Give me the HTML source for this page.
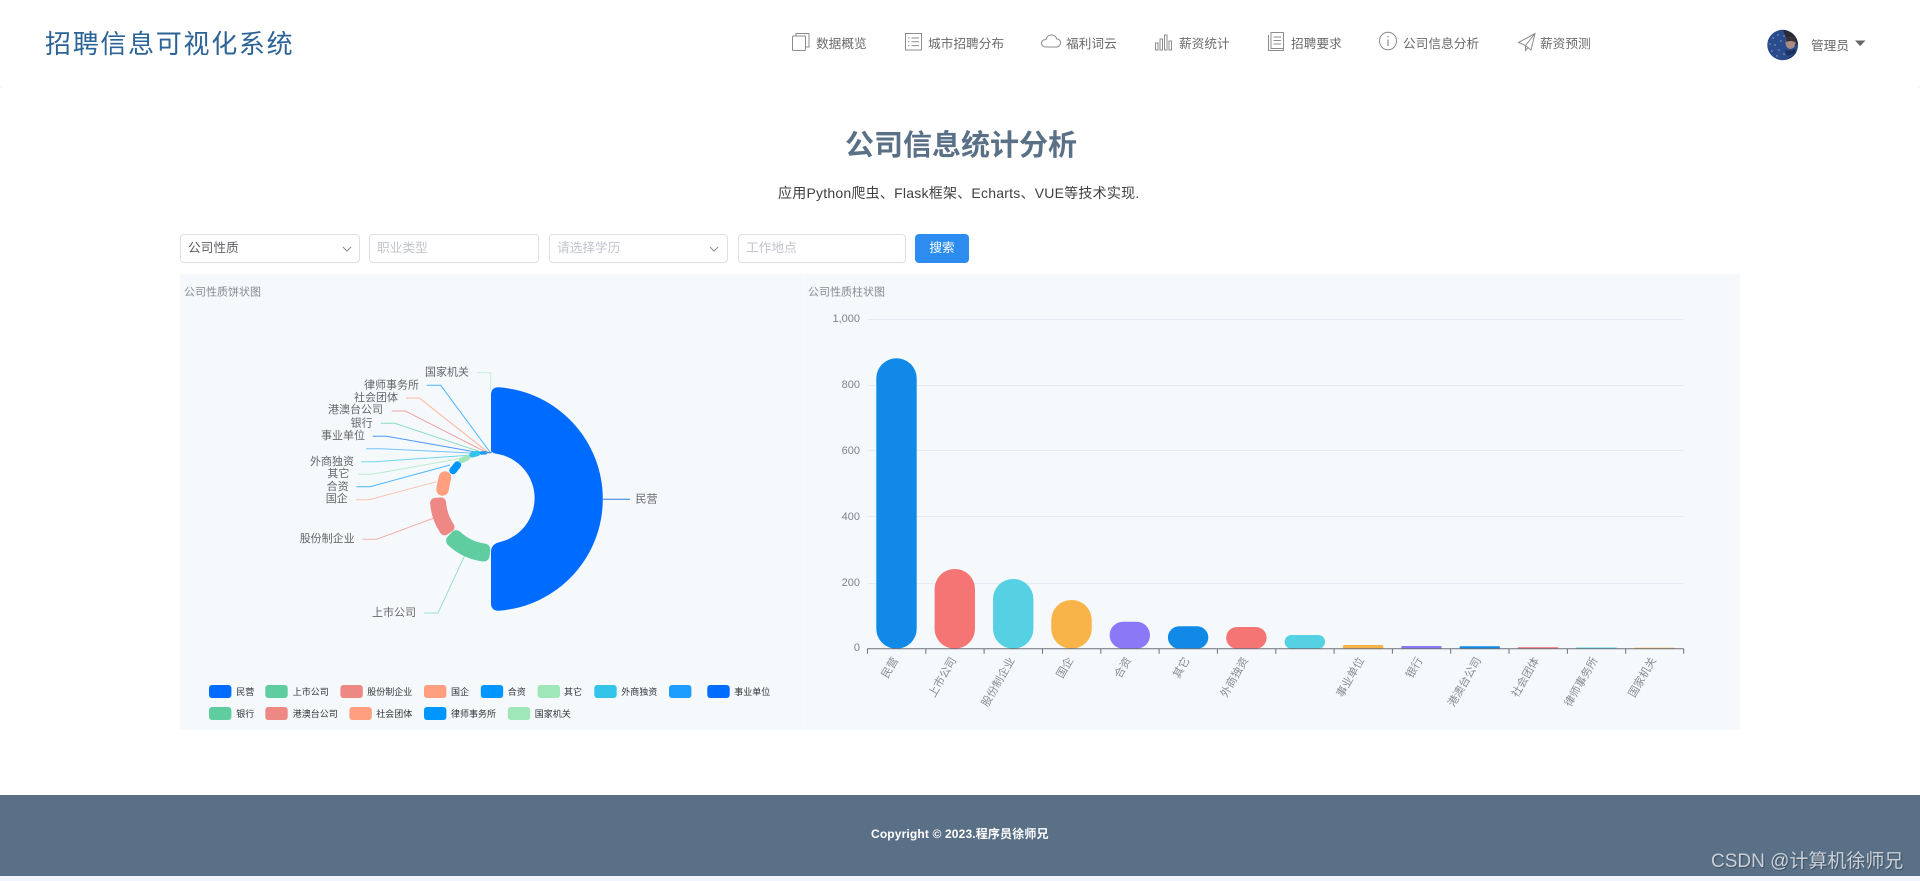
<!DOCTYPE html>
<html lang="zh-CN">
<head>
<meta charset="utf-8">
<title>公司信息统计分析</title>
<style>
html,body{margin:0;padding:0;width:1920px;height:881px;overflow:hidden;background:#fff;font-family:"Liberation Sans","Noto Sans CJK SC",sans-serif}
.t{position:absolute;white-space:nowrap;line-height:20px;height:20px}
.nav{font-size:12.7px;color:#6a6a6a}
.box{position:absolute;box-sizing:border-box;top:234px;height:29px;background:#fff;border:1px solid #dcdfe6;border-radius:4px;font-size:12.7px;line-height:27px;padding-left:7px;color:#c0c4cc;white-space:nowrap}
svg{position:absolute;left:0;top:0}
</style>
</head>
<body>
<div style="position:absolute;left:0;top:0;width:1920px;height:88px;background:#fff"></div>
<svg width="1920" height="881" viewBox="0 0 1920 881" font-family="'Liberation Sans','Noto Sans CJK SC',sans-serif">
  <!-- header corners -->
  <path d="M0 83V88H5Q0 88 0 83Z" fill="#f0f5ff"/>
  <path d="M1920 83V88H1915Q1920 88 1920 83Z" fill="#f0f5ff"/>

  <!-- nav icons -->
  <g fill="none" stroke="#8c8c8c" stroke-width="1">
    <rect x="792.5" y="36" width="13" height="14.5" rx="1" fill="#fff"/>
    <path d="M796 35.5V33.5H809V47H806"/>
    <rect x="905.5" y="33.5" width="16" height="16.5"/>
    <path d="M908 38H909.5M911.5 38H919M908 41.8H909.5M911.5 41.8H919M908 45.6H909.5M911.5 45.6H919"/>
    <path d="M1046 47H1056C1059 47 1060.5 45 1060.5 42.8C1060.5 40.5 1058.8 39 1056.8 39C1056 36.5 1054 35 1051.5 35C1048.5 35 1046.5 37 1046 39.5C1043 39.7 1041.5 41.3 1041.5 43.3C1041.5 45.5 1043.4 47 1046 47Z"/>
    <path d="M1155.5 50V43H1158V50ZM1160 50V39H1162.5V50ZM1164.5 50V35H1167V50ZM1169 50V41H1171.5V50Z"/>
    <path d="M1268.5 35V50.5H1283.5V48M1271 48.5V32.5H1283.5V48.5ZM1273.5 37H1281M1273.5 40.5H1281M1273.5 44H1281"/>
    <ellipse cx="1388" cy="41" rx="8.5" ry="8.8"/>
    <path d="M1388 39.5V46M1388 36V37.4" stroke="#777"/>
    <path d="M1518.5 42.5L1535 33.5L1531 50L1525.5 45.5ZM1535 33.5L1525.5 45.5V50.5L1528 47.5"/>
  </g>

  <!-- avatar -->
  <clipPath id="av"><ellipse cx="1782.7" cy="45" rx="15.4" ry="15.2"/></clipPath>
  <g clip-path="url(#av)">
    <rect x="1767" y="29" width="32" height="32" fill="#2b4c8c"/>
    <path d="M1783 61C1790 58 1796 54 1799 48V61Z" fill="#16294f"/>
    <path d="M1767 50V61H1777C1772 58 1769 54 1767 50Z" fill="#1f3a70"/>
    <path d="M1783 30C1790 30 1797 36 1798 44L1795 46C1794 40 1790 38 1787 38C1785 36 1784 33 1783 30Z" fill="#2b2a35"/>
    <ellipse cx="1790.5" cy="43" rx="5" ry="5.8" fill="#ab8a84"/>
    <path d="M1786 39Q1790 35.5 1795.5 39.5L1795 42Q1790 40 1786.5 42Z" fill="#3a2f33"/>
    <path d="M1785 50Q1790 52 1795 48.5L1796 53L1787 56Z" fill="#1d3160"/>
    <g fill="#c3d2ec">
      <circle cx="1773" cy="38" r=".6"/><circle cx="1778" cy="35" r=".6"/><circle cx="1775" cy="45" r=".6"/>
      <circle cx="1781" cy="41" r=".6"/><circle cx="1772" cy="51" r=".6"/><circle cx="1779" cy="50" r=".6"/>
      <circle cx="1784" cy="36" r=".6"/><circle cx="1784" cy="54" r=".6"/><circle cx="1770" cy="44" r=".6"/><circle cx="1777" cy="56" r=".6"/>
    </g>
  </g>
  <path d="M1855 40.5H1865.5L1860.2 46Z" fill="#666"/>

  <!-- charts background -->
  <rect x="180" y="274" width="1560" height="456" fill="#f5f9fc"/>
  <rect x="803.3" y="274" width="1" height="450" fill="#fafcfd"/>

  <!-- chart titles -->
  <text x="184" y="295.5" font-size="11" fill="#8a8a8a">公司性质饼状图</text>
  <text x="808" y="295.5" font-size="11" fill="#8a8a8a">公司性质柱状图</text>

  <!-- pie label lines -->
  <g fill="none" stroke-width="1">
    <path d="M477.3 372.7H490.7V390" stroke="#c6efd6"/>
    <path d="M426.7 385.3H440.7L490.7 453" stroke="#4db5ff"/>
    <path d="M406 398H419.3L489.3 453.3" stroke="#ffb69c"/>
    <path d="M391.7 411H405.3L488.3 453.3" stroke="#f0a3a0"/>
    <path d="M380.7 423.3H394.7L480 451.7" stroke="#8cdcbc"/>
    <path d="M372.7 436.3H386.7L480 452.7" stroke="#4d98ff"/>
    <path d="M366 448.7H380L476.7 453.3" stroke="#76c4ff"/>
    <path d="M361.3 461.7H375L473.3 455" stroke="#70d6ef"/>
    <path d="M358.3 474.3H372L461.7 458.3" stroke="#bceecd"/>
    <path d="M356.3 486.7H370L450 465" stroke="#4db5ff"/>
    <path d="M355.7 499.7H369L436.7 481.7" stroke="#ffc2ad"/>
    <path d="M362.4 539.3H376.7L434 518" stroke="#f4b1ae"/>
    <path d="M424 613H438L464.5 556" stroke="#9fe1c6"/>
    <path d="M603 499.3H630" stroke="#2f7fe0"/>
  </g>

  <!-- pie slices -->
  <path d="M491 395Q491 387 499 387.3A112 112 0 0 1 499 610.7Q491 611 491 603V552Q491 544 500 542A45 45 0 0 0 498 454Q492.5 453.5 491 451Z" fill="#006cff"/>
  <path d="M483.6 555.5A57 57 0 0 1 452.1 540.7L456.2 536.3A51 51 0 0 0 484.3 549.6Z" fill="#60cda0" stroke="#60cda0" stroke-width="12" stroke-linejoin="round"/>
  <path d="M444.6 530.3A56 56 0 0 1 435.1 502.9L441.1 502.5A50 50 0 0 0 449.5 527Z" fill="#ed8884" stroke="#ed8884" stroke-width="10" stroke-linejoin="round"/>
  <g fill="none" stroke-linecap="round">
    <path d="M442.5 489.5Q443.5 483 445 477.5" stroke="#ff9f7f" stroke-width="12.5"/>
    <path d="M453 470.5L457.5 465" stroke="#0096ff" stroke-width="7.5"/>
    <path d="M461.5 460.5L467.5 457.5" stroke="#9fe6b8" stroke-width="5.5"/>
    <path d="M472 454.8L477.5 453.3" stroke="#32c5e9" stroke-width="5.5"/>
    <path d="M481.5 453L485.5 452.7" stroke="#1d9dff" stroke-width="3.5"/>
    <path d="M486 452.6L491 452.6" stroke="#5a8fd0" stroke-width="1.4"/>
  </g>

  <!-- pie labels -->
  <g font-size="11" fill="#666" text-anchor="end">
    <text x="469" y="375.5">国家机关</text>
    <text x="419" y="388.5">律师事务所</text>
    <text x="398" y="401">社会团体</text>
    <text x="383" y="413">港澳台公司</text>
    <text x="372.6" y="426.5">银行</text>
    <text x="365" y="439">事业单位</text>
    <text x="354" y="465">外商独资</text>
    <text x="349.4" y="477">其它</text>
    <text x="348.6" y="490">合资</text>
    <text x="347.8" y="502">国企</text>
    <text x="354.7" y="542">股份制企业</text>
    <text x="416" y="616">上市公司</text>
  </g>
  <text x="635.5" y="502.7" font-size="11" fill="#666">民营</text>

  <!-- legend -->
  <g>
    <rect x="209" y="685" width="22.4" height="13" rx="3" fill="#006cff"/>
    <rect x="265.3" y="685" width="22.4" height="13" rx="3" fill="#60cda0"/>
    <rect x="340.4" y="685" width="22.4" height="13" rx="3" fill="#ed8884"/>
    <rect x="424" y="685" width="22.4" height="13" rx="3" fill="#ff9f7f"/>
    <rect x="480.8" y="685" width="22.4" height="13" rx="3" fill="#0096ff"/>
    <rect x="537.6" y="685" width="22.4" height="13" rx="3" fill="#9fe6b8"/>
    <rect x="594.3" y="685" width="22.4" height="13" rx="3" fill="#32c5e9"/>
    <rect x="669" y="685" width="22.4" height="13" rx="3" fill="#1d9dff"/>
    <rect x="707.3" y="685" width="22.4" height="13" rx="3" fill="#006cff"/>
    <rect x="209" y="707" width="22.4" height="13" rx="3" fill="#60cda0"/>
    <rect x="265.3" y="707" width="22.4" height="13" rx="3" fill="#ed8884"/>
    <rect x="349.4" y="707" width="22.4" height="13" rx="3" fill="#ff9f7f"/>
    <rect x="424" y="707" width="22.4" height="13" rx="3" fill="#0096ff"/>
    <rect x="507.8" y="707" width="22.4" height="13" rx="3" fill="#9fe6b8"/>
  </g>
  <g font-size="9" fill="#333">
    <text x="236.3" y="694.8">民营</text>
    <text x="292.7" y="694.8">上市公司</text>
    <text x="367.3" y="694.8">股份制企业</text>
    <text x="451" y="694.8">国企</text>
    <text x="507.8" y="694.8">合资</text>
    <text x="564" y="694.8">其它</text>
    <text x="621.2" y="694.8">外商独资</text>
    <text x="734.3" y="694.8">事业单位</text>
    <text x="236.3" y="716.8">银行</text>
    <text x="292.7" y="716.8">港澳台公司</text>
    <text x="376.3" y="716.8">社会团体</text>
    <text x="451" y="716.8">律师事务所</text>
    <text x="534.7" y="716.8">国家机关</text>
  </g>

  <!-- bar grid -->
  <g stroke="#e7ebf3" stroke-width="1" fill="none">
    <path d="M867.3 319.5H1683.7M867.3 385.5H1683.7M867.3 450.5H1683.7M867.3 516.5H1683.7M867.3 583.5H1683.7"/>
  </g>

  <!-- bars -->
  <rect x="876.3" y="358.3" width="40.4" height="290.4" rx="20" fill="#1089e7"/>
  <rect x="934.6" y="569" width="40.4" height="79.7" rx="20" fill="#f57474"/>
  <rect x="993" y="579" width="40.4" height="69.7" rx="20" fill="#56d0e3"/>
  <rect x="1051.3" y="600" width="40.4" height="48.7" rx="20" fill="#f8b448"/>
  <rect x="1109.6" y="621.7" width="40.4" height="27" rx="13.5" fill="#8b78f6"/>
  <rect x="1167.9" y="626.3" width="40.4" height="22.4" rx="11.2" fill="#1089e7"/>
  <rect x="1226.2" y="627" width="40.4" height="21.7" rx="10.8" fill="#f57474"/>
  <rect x="1284.6" y="635" width="40.4" height="13.7" rx="6.8" fill="#56d0e3"/>
  <rect x="1342.9" y="645" width="40.4" height="3.7" rx="1.5" fill="#f8b448"/>
  <rect x="1401.2" y="646" width="40.4" height="2.7" rx="1.2" fill="#8b78f6"/>
  <rect x="1459.5" y="646.3" width="40.4" height="2.4" rx="1" fill="#1089e7"/>
  <rect x="1517.8" y="647.2" width="40.4" height="1.5" fill="#f57474"/>
  <rect x="1576.2" y="647.5" width="40.4" height="1.2" fill="#56d0e3"/>
  <rect x="1634.5" y="647.7" width="40.4" height="1" fill="#f8b448"/>

  <!-- axis -->
  <path d="M867.3 648.7H1683.7" stroke="#6e7079" stroke-width="1" fill="none"/>
  <path d="M867.5 648.7v5M925.8 648.7v5M984.1 648.7v5M1042.5 648.7v5M1100.8 648.7v5M1159.1 648.7v5M1217.4 648.7v5M1275.8 648.7v5M1334.1 648.7v5M1392.4 648.7v5M1450.7 648.7v5M1509 648.7v5M1567.4 648.7v5M1625.7 648.7v5M1683.7 648.7v5" stroke="#6e7079" stroke-width="1" fill="none"/>

  <!-- y labels -->
  <g font-size="11" fill="#7f828a" text-anchor="end">
    <text x="860" y="322">1,000</text>
    <text x="860" y="388">800</text>
    <text x="860" y="454">600</text>
    <text x="860" y="520">400</text>
    <text x="860" y="586">200</text>
    <text x="860" y="651">0</text>
  </g>

  <!-- x labels -->
  <g font-size="11" fill="#8a8c92" text-anchor="end">
    <text transform="translate(898.5 660) rotate(-60)">民营</text>
    <text transform="translate(956.5 660) rotate(-60)">上市公司</text>
    <text transform="translate(1015 660) rotate(-60)">股份制企业</text>
    <text transform="translate(1073.5 660) rotate(-60)">国企</text>
    <text transform="translate(1131.5 660) rotate(-60)">合资</text>
    <text transform="translate(1190 660) rotate(-60)">其它</text>
    <text transform="translate(1248.5 660) rotate(-60)">外商独资</text>
    <text transform="translate(1364.5 660) rotate(-60)">事业单位</text>
    <text transform="translate(1423 660) rotate(-60)">银行</text>
    <text transform="translate(1481.5 660) rotate(-60)">港澳台公司</text>
    <text transform="translate(1539.5 660) rotate(-60)">社会团体</text>
    <text transform="translate(1598 660) rotate(-60)">律师事务所</text>
    <text transform="translate(1656.5 660) rotate(-60)">国家机关</text>
  </g>

  <!-- footer -->
  <rect x="0" y="795" width="1920" height="81" fill="#5a7087"/>
  <rect x="0" y="876" width="1920" height="5" fill="#f0f5ff"/>
</svg>

<div class="t" style="left:45px;top:28px;height:32px;line-height:32px;font-size:26px;letter-spacing:1.7px;color:#2c6396">招聘信息可视化系统</div>

<div class="t nav" style="left:816px;top:34px">数据概览</div>
<div class="t nav" style="left:928px;top:34px">城市招聘分布</div>
<div class="t nav" style="left:1066px;top:34px">福利词云</div>
<div class="t nav" style="left:1179px;top:34px">薪资统计</div>
<div class="t nav" style="left:1291px;top:34px">招聘要求</div>
<div class="t nav" style="left:1403px;top:34px">公司信息分析</div>
<div class="t nav" style="left:1540px;top:34px">薪资预测</div>
<div class="t nav" style="left:1811px;top:36px">管理员</div>

<div class="t" style="left:845px;top:126px;height:40px;line-height:40px;font-size:29px;font-weight:700;color:#5a7087">公司信息统计分析</div>
<div class="t" style="left:778px;top:183px;font-size:14px;letter-spacing:.23px;color:#3f3f3f">应用Python爬虫、Flask框架、Echarts、VUE等技术实现.</div>

<div class="box" style="left:180px;width:180px;color:#606266">公司性质
  <svg width="10" height="6" viewBox="0 0 10 6" style="left:161px;top:11px"><path d="M1 1L5 5L9 1" fill="none" stroke="#888" stroke-width="1"/></svg>
</div>
<div class="box" style="left:369px;width:170px">职业类型</div>
<div class="box" style="left:549px;width:179px">请选择学历
  <svg width="10" height="6" viewBox="0 0 10 6" style="left:159px;top:11px"><path d="M1 1L5 5L9 1" fill="none" stroke="#888" stroke-width="1"/></svg>
</div>
<div class="box" style="left:738px;width:168px">工作地点</div>
<div class="box" style="left:915px;width:54px;background:#2d8cf0;border-color:#2d8cf0;color:#fff;text-align:center;padding:0">搜索</div>

<div class="t" style="left:871px;top:824px;font-size:12px;font-weight:700;letter-spacing:.15px;color:#fff">Copyright © 2023.程序员徐师兄</div>
<div class="t" style="left:1711px;top:849px;height:26px;line-height:26px;font-size:19px;color:#c9d0d8;text-shadow:1px 1px 1px #3f4f60">CSDN @计算机徐师兄</div>
</body>
</html>
